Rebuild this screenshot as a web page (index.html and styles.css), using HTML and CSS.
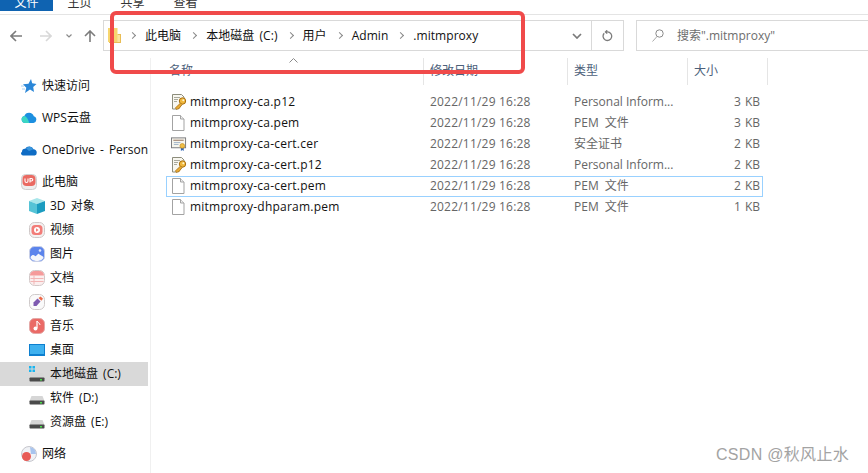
FILE: index.html
```html
<!DOCTYPE html>
<html lang="zh-CN">
<head>
<meta charset="utf-8">
<title>.mitmproxy</title>
<link rel="stylesheet" href="styles.css">
</head>
<body>
<svg class="defs" width="0" height="0" aria-hidden="true">
  <symbol id="doc" viewBox="0 0 14 16"><path d="M.5.500h8l3.500 3.500v11.500H.5z" fill="#fff" stroke="#a3a3a3"/><path d="M8.500.5v3.500h3.500" fill="#eee" stroke="#a3a3a3"/></symbol>
  <symbol id="p12" viewBox="0 0 16 16"><path d="M1.500.5h9l2.500 2.500v5l-6 7H1.500z" fill="#f8f7f0" stroke="#8d8d7c"/><path d="M3 3.500h6M3 5.500h4M3 7.500h3" stroke="#a9a99c"/><circle cx="11.500" cy="7" r="3.200" fill="#f0b83c" stroke="#a86f12"/><circle cx="12.300" cy="6.200" r="1" fill="#fff6d2"/><path d="M9.300 9.300l-5 4.700 1.600 1.500 1-1 .8.500 3.300-4.400" fill="#e9ab33" stroke="#a86f12" stroke-width=".8"/></symbol>
  <symbol id="cer" viewBox="0 0 17 16"><rect x=".5" y="1.500" width="15" height="10.500" fill="#f7f6ee" stroke="#77777a"/><path d="M2.500 4h11" stroke="#8d6a54"/><path d="M3 6.500h7M3 8.500h5" stroke="#9fb2c6"/><path d="M10.500 11.500v4l1.500-1 1.500 1v-4" fill="#2f66b6"/><circle cx="12" cy="10" r="2.500" fill="#f0bf45" stroke="#c58a1c" stroke-width=".7"/></symbol>
  <symbol id="drive" viewBox="0 0 16 10"><path d="M2.500 1h11l2 5h-15z" fill="#d6d6d6"/><rect x=".5" y="5.500" width="15" height="4" rx=".8" fill="#4a4a4a"/><rect x="11" y="7" width="2" height="1.500" fill="#4ade4a"/></symbol>
</svg>
<div class="ribbon">
  <div class="tab tab-active">文件</div>
  <div class="tab">主页</div>
  <div class="tab">共享</div>
  <div class="tab">查看</div>
</div>
<div class="toolbar">
  <div class="nav">
    <svg class="nav-back" width="12" height="12" viewBox="0 0 12 12"><path d="M6 1L1 6l5 5M1 6h11" fill="none" stroke="#7c7c7c" stroke-width="1.600"/></svg>
    <svg class="nav-forward" width="12" height="12" viewBox="0 0 12 12"><path d="M6 1l5 5-5 5M11 6H0" fill="none" stroke="#d8d8d8" stroke-width="1.600"/></svg>
    <svg class="nav-down" width="6" height="4" viewBox="0 0 6 4"><path d="M.5.500L3 3 5.500.5" fill="none" stroke="#8a8a8a" stroke-width="1.200"/></svg>
    <svg class="nav-up" width="12" height="12" viewBox="0 0 12 12"><path d="M1 6l5-5 5 5M6 1v11" fill="none" stroke="#7c7c7c" stroke-width="1.600"/></svg>
  </div>
  <div class="address">
    <svg class="folder" width="13" height="16" viewBox="0 0 13 16"><path d="M0 0h9.500v14H0z" fill="#f7d66f"/><path d="M9.500 6H13v9H1v-1h8.500z" fill="#e9bd55"/><path d="M9.500 7H12v7H9.500z" fill="#fbe59c"/></svg>
    <span class="crumb-sep"></span><span class="crumb">此电脑</span>
    <span class="crumb-sep"></span><span class="crumb">本地磁盘 (C:)</span>
    <span class="crumb-sep"></span><span class="crumb">用户</span>
    <span class="crumb-sep"></span><span class="crumb">Admin</span>
    <span class="crumb-sep"></span><span class="crumb">.mitmproxy</span>
    <span class="address-spacer"></span>
    <div class="address-drop"><svg width="10" height="6" viewBox="0 0 10 6"><path d="M1 1l4 4 4-4" fill="none" stroke="#7a7a7a" stroke-width="1.700"/></svg></div>
    <div class="address-refresh"><svg width="11" height="12" viewBox="0 0 11 12"><path d="M2.200 3.300a4.300 4.300 0 1 0 3.300-1.400H3.500M5.200.3L3.400 1.900l1.800 1.700" fill="none" stroke="#7c7c7c" stroke-width="1.300"/></svg></div>
  </div>
  <div class="search">
    <svg width="12" height="13" viewBox="0 0 12 13"><circle cx="7.500" cy="4.500" r="3.700" fill="none" stroke="#8a8a8a"/><path d="M5 7.500L.5 12.500" stroke="#a9a9a9"/></svg>
    <span>搜索".mitmproxy"</span>
  </div>
</div>
<div class="main">
  <nav class="sidebar">
    <div class="item group"><svg class="ico" viewBox="0 0 16 16"><path d="M10 1l1.200 4.300L15.500 6l-3.300 3 .8 5-4-2.600L4 15l1.300-5.200L2 6.300l5.500-.6z" fill="#2b87d8"/><path d="M0 8h3M1 11h3" stroke="#a8d0f0"/></svg><span>快速访问</span></div>
    <div class="item group"><svg class="ico" viewBox="0 0 16 16"><path d="M4 13a3.500 3.500 0 0 1-.7-6.900A5 5 0 0 1 12.800 6.200 3.500 3.500 0 0 1 12.500 13z" fill="#1c8fe0"/><path d="M4 13a3.500 3.500 0 0 1-.7-6.900c2 0 3.700 3 5 6.900z" fill="#3bd6c4"/></svg><span>WPS云盘</span></div>
    <div class="item group"><svg class="ico" viewBox="0 0 16 16"><path d="M2 13.500a2 2 0 0 1-1-3.700 3 3 0 0 1 3.200-3 4.500 4.500 0 0 1 8.200.5 3.200 3.200 0 0 1 3.300 3.500 2.700 2.700 0 0 1-2 2.700z" fill="#0f6cc4"/><path d="M5 6.500a4.500 4.500 0 0 1 7.500.8L8 9z" fill="#3a96dd"/></svg><span>OneDrive - Personal</span></div>
    <div class="item"><svg class="ico" viewBox="0 0 16 16"><rect x=".5" y=".5" width="15" height="15" rx="4" fill="#eeeeee" stroke="#d0d0d0"/><rect x="1.500" y="1" width="13" height="11" rx="4" fill="#ea6a62"/><path d="M4 4.500v2.500a1.400 1.400 0 0 0 3 0V4.500M9 8.500v-4h1.500a1.200 1.200 0 0 1 0 2.500H9" fill="none" stroke="#fff" stroke-width="1.100"/></svg><span>此电脑</span></div>
    <div class="item child"><svg class="ico" viewBox="0 0 16 16"><path d="M0 3l8-3 8 3-8 3z" fill="#a8e6ea"/><path d="M0 3l8 3v10l-8-3z" fill="#55c3d6"/><path d="M16 3l-8 3v10l8-3z" fill="#1b9cc0"/></svg><span>3D 对象</span></div>
    <div class="item child"><svg class="ico" viewBox="0 0 16 16"><rect x=".5" y=".5" width="15" height="15" rx="5" fill="#f4f1f1" stroke="#cfc8c8"/><rect x="2.500" y="3" width="11" height="10" rx="3.500" fill="#f27c78"/><circle cx="8" cy="8" r="3" fill="#fff"/><path d="M7 6.300L9.700 8 7 9.700z" fill="#f27c78"/></svg><span>视频</span></div>
    <div class="item child"><svg class="ico" viewBox="0 0 16 16"><rect x=".5" y=".5" width="15" height="15" rx="5" fill="#5b84ec" stroke="#c8cfe6"/><path d="M1.500 11c2-3 3.500-2 4.500-1s3-3 4-2 3.500 2 4.500 3c-.5 3-3.500 4-6.500 4s-6-1-6.500-4z" fill="#f4f6fb"/><circle cx="11" cy="4.500" r="1.300" fill="#dfe7fb"/></svg><span>图片</span></div>
    <div class="item child"><svg class="ico" viewBox="0 0 16 16"><rect x=".5" y=".5" width="15" height="15" rx="5" fill="#fbeeee" stroke="#d2c8c8"/><path d="M1 5.500a4.500 4.500 0 0 1 4.500-4.500h5A4.500 4.500 0 0 1 15 5.500z" fill="#f59a9a"/><path d="M1.500 8.500h13M1.500 11.500h13M5 5.500v9" stroke="#f2b5b5"/></svg><span>文档</span></div>
    <div class="item child"><svg class="ico" viewBox="0 0 16 16"><rect x=".5" y=".5" width="15" height="15" rx="5" fill="#fafafa" stroke="#cfcaca"/><path d="M8.500 4.500l3 3-4 4.500H4.500V8.500z" fill="#7e5ab0"/><path d="M9.500 4l2.800 2.800 1.700-2-2.300-2.300z" fill="#ee6a4a"/></svg><span>下载</span></div>
    <div class="item child"><svg class="ico" viewBox="0 0 16 16"><rect x=".5" y=".5" width="15" height="15" rx="5" fill="#ea6a66" stroke="#e3a8a6"/><path d="M8 3v7" stroke="#fff" stroke-width="1.200"/><circle cx="6.500" cy="10.500" r="2" fill="#fff"/><path d="M8 3c1 2 3 2 3 4" fill="none" stroke="#fff"/></svg><span>音乐</span></div>
    <div class="item child"><svg class="ico" viewBox="0 0 16 16"><rect y="2" width="16" height="12" fill="#0d7fcf"/><rect x="1" y="3" width="14" height="9" fill="#3fb1ef"/></svg><span>桌面</span></div>
    <div class="item child selected"><svg class="ico" viewBox="0 0 16 16"><path d="M0 0h2.500v2.500H0zM3.500 0H6v2.500H3.500zM0 3.500h2.500V6H0zM3.500 3.500H6V6H3.500z" fill="#18b4f0"/><use href="#drive" y="6" width="16" height="10"/></svg><span>本地磁盘 (C:)</span></div>
    <div class="item child"><svg class="ico" viewBox="0 0 16 16"><use href="#drive" y="5" width="16" height="10"/></svg><span>软件 (D:)</span></div>
    <div class="item child group"><svg class="ico" viewBox="0 0 16 16"><use href="#drive" y="5" width="16" height="10"/></svg><span>资源盘 (E:)</span></div>
    <div class="item"><svg class="ico" viewBox="0 0 16 16"><circle cx="8" cy="8" r="7.500" fill="#f0f2f6" stroke="#c6c6cc"/><path d="M9 1a7 7 0 0 1 6 7l-5 0z" fill="#a8c4ee"/><circle cx="5.500" cy="10.500" r="4.500" fill="#e85a55"/></svg><span>网络</span></div>
  </nav>
  <section class="list">
    <div class="head">
      <div class="col-name">名称<svg class="sort" width="9" height="5" viewBox="0 0 9 5"><path d="M.5 4.500l4-4 4 4" fill="none" stroke="#8a8a8a"/></svg></div>
      <div>修改日期</div>
      <div>类型</div>
      <div>大小</div>
    </div>
    <div class="row">
      <div class="name"><svg class="file" viewBox="0 0 16 16"><use href="#p12"/></svg>mitmproxy-ca.p12</div><div class="cell date">2022/11/29 16:28</div><div class="cell">Personal Inform...</div><div class="cell size">3 KB</div>
    </div>
    <div class="row">
      <div class="name"><svg class="file" viewBox="0 0 16 16"><use href="#doc"/></svg>mitmproxy-ca.pem</div><div class="cell date">2022/11/29 16:28</div><div class="cell pem">PEM 文件</div><div class="cell size">3 KB</div>
    </div>
    <div class="row">
      <div class="name"><svg class="file" viewBox="0 0 16 16"><use href="#cer"/></svg>mitmproxy-ca-cert.cer</div><div class="cell date">2022/11/29 16:28</div><div class="cell">安全证书</div><div class="cell size">2 KB</div>
    </div>
    <div class="row">
      <div class="name"><svg class="file" viewBox="0 0 16 16"><use href="#p12"/></svg>mitmproxy-ca-cert.p12</div><div class="cell date">2022/11/29 16:28</div><div class="cell">Personal Inform...</div><div class="cell size">2 KB</div>
    </div>
    <div class="row focused">
      <div class="name"><svg class="file" viewBox="0 0 16 16"><use href="#doc"/></svg>mitmproxy-ca-cert.pem</div><div class="cell date">2022/11/29 16:28</div><div class="cell pem">PEM 文件</div><div class="cell size">2 KB</div>
    </div>
    <div class="row">
      <div class="name"><svg class="file" viewBox="0 0 16 16"><use href="#doc"/></svg>mitmproxy-dhparam.pem</div><div class="cell date">2022/11/29 16:28</div><div class="cell pem">PEM 文件</div><div class="cell size">1 KB</div>
    </div>
  </section>
</div>
<div class="annotation"></div>
<div class="watermark">CSDN @秋风止水</div>
</body>
</html>
```
FILE: styles.css
```css
* { box-sizing: border-box; }
html, body { margin: 0; height: 473px; overflow: hidden; }
body {
  position: relative;
  background: #fff;
  color: #1a1a1a;
  font: 12px/16px "Open Sans", "Noto Sans CJK SC", sans-serif;
}
.defs { position: absolute; }

.ribbon { display: flex; height: 15px; border-bottom: 1px solid #e4e4e4; overflow: hidden; }
.tab { width: 53px; height: 11px; line-height: 6px; text-align: center; color: #333; }
.tab-active { background: #0f63b1; color: #fff; }

.toolbar { display: flex; height: 36px; padding-top: 5px; }
.nav { width: 103px; display: flex; align-items: center; padding-left: 10px; }
.nav-forward { margin-left: 18px; }
.nav-down { margin-left: 14px; }
.nav-up { margin-left: 12px; }

.address { width: 521px; display: flex; align-items: center; border: 1px solid #d9d9d9; padding-left: 4px; color: #111; word-spacing: 2px; letter-spacing: .05px; }
.folder { margin-right: 10px; }
.crumb-sep { width: 5px; height: 5px; border-top: 1.500px solid #888; border-right: 1.500px solid #888; transform: rotate(45deg); margin-right: 10px; margin-left: -1px; }
.crumb { margin-right: 11px; white-space: nowrap; }
.address-spacer { flex: 1; }
.address-drop { width: 30px; height: 100%; display: flex; align-items: center; justify-content: center; border-right: 1px solid #d9d9d9; }
.address-refresh { width: 31px; display: flex; justify-content: center; }

.search { flex: 1; margin-left: 12px; display: flex; align-items: center; gap: 13px; padding-left: 15px; border: 1px solid #d9d9d9; border-right: 0; color: #6d6d6d; }

.main { display: flex; padding-top: 7px; }
.sidebar { width: 151px; height: 415px; padding: 16px 2px 0 0; border-right: 1px solid #f0f0f0; color: #111; word-spacing: 2px; }
.item { display: flex; align-items: center; gap: 5px; width: 148px; height: 24px; padding-left: 21px; white-space: nowrap; overflow: hidden; }
.group { margin-bottom: 8px; }
.child { padding-left: 29px; }
.selected { background: #d9d9d9; }
.ico { flex: none; width: 16px; height: 16px; }

.list { margin-left: 15px; }
.head { display: grid; grid-template-columns: 258px 144px 120px 80px; height: 27px; margin-bottom: 7px; color: #4c607a; }
.head > div { position: relative; padding: 5px 0 0 6px; border-right: 1px solid #e5e5e5; }
.head > .col-name { padding-left: 3px; }
.sort { position: absolute; left: 123px; top: 0; }
.row { display: grid; grid-template-columns: 258px 144px 120px 75px; width: 597px; height: 21px; align-items: center; border: 1px solid transparent; }
.row > div { margin-top: -1px; }
.focused { border-color: #99d1ff; }
.name { display: flex; align-items: center; gap: 3px; padding-left: 4px; color: #111; white-space: nowrap; letter-spacing: .22px; }
.file { width: 16px; height: 16px; flex: none; }
.cell { padding-left: 5px; color: #666; white-space: nowrap; }
.pem { word-spacing: 3px; }
.date { letter-spacing: .2px; }
.size { text-align: right; padding-right: 4px; word-spacing: 1px; }

.annotation { position: absolute; left: 110px; top: 11px; width: 415px; height: 63px; border: 4px solid #f04a4a; border-radius: 6px; }
.watermark { position: absolute; left: 716px; top: 445px; font: 16px/20px "Liberation Sans", "Noto Sans CJK SC", sans-serif; letter-spacing: .3px; color: #a3a3a3; white-space: nowrap; }
```
